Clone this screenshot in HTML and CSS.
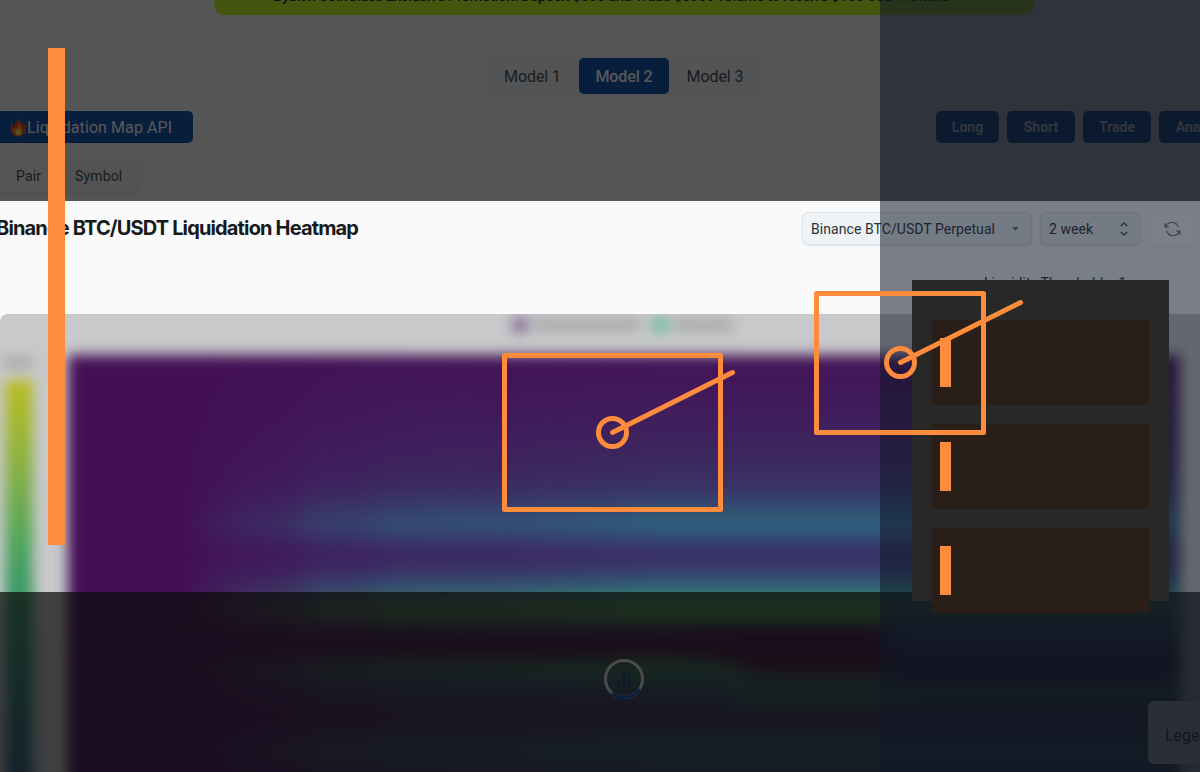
FILE: index.html
```html
<!DOCTYPE html>
<html lang="en">
<head>
<meta charset="utf-8">
<title>Liquidation Heatmap</title>
<link rel="stylesheet" href="styles.css">
</head>
<body>
<main class="page">
  <header class="promo"><span>Bybit x CoinGlass Exclusive Promotion: Deposit $500 and Trade $5000 volume to receive $100 USDT reward &gt;&gt;</span></header>
  <nav class="models">
    <span class="model">Model 1</span><span class="model active">Model 2</span><span class="model">Model 3</span>
  </nav>
  <div class="actions">
    <span class="api"><svg class="flame" viewBox="0 0 18 20"><path fill="#f4511e" d="M9 0c0 3 4 5 5 9l1-3c2 4 3 8 0 11-3 4-10 4-13 0-2-3-2-6 0-9l2 3C4 6 9 5 9 0z"/><path fill="#f4511e" d="M1 5l2 1-1 4-1-1z"/><path fill="#ff9d2e" d="M9 5c0 4 5 5 4 10-1 5-8 5-9 1-1-3 1-4 2-6l1 2c2-2 2-4 2-7z"/><path fill="#ffe57a" d="M9 11c3 3 4 5 2 7-2 2-5 1-5-2 0-2 3-3 3-5z"/></svg><span class="api-text">Liquidation Map API</span></span>
    <div class="links"><b class="link long">Long</b><b class="link">Short</b><b class="link">Trade</b><b class="link analysis">Analysis</b></div>
  </div>
  <div class="scope"><span class="pair">Pair</span><span class="symbol">Symbol</span></div>
  <section class="heading">
    <h1>Binance BTC/USDT Liquidation Heatmap</h1>
    <div class="controls">
      <div class="select market"><span>Binance BTC/USDT Perpetual</span><svg width="7" height="4" viewBox="0 0 8 5"><path d="M0 .3h8L4 4.6z" fill="#59636e"/></svg></div>
      <div class="select period"><span>2 week</span><svg width="8" height="14" viewBox="0 0 8 14"><path d="M.8 4L4 1l3.200 3M.8 10L4 13l3.200-3" fill="none" stroke="#4c5660" stroke-width="1.400"/></svg></div>
      <div class="refresh"><svg width="17" height="16" viewBox="0 0 17 16" fill="none" stroke="#687078" stroke-width="1.100"><path d="M1 2v4h4M1.300 6C3.500 1 9 0 12.500 3l2 3M16 14v-4h-4M15.700 10c-2.200 5-7.700 6-11.200 3l-2-3"/></svg></div>
    </div>
  </section>
  <div class="threshold"><span>Liquidity Threshold = 1</span></div>
  <section class="chart">
    <svg class="heat" width="1200" height="458" viewBox="0 314 1200 458">
      <defs>
        <filter id="soft" x="-5%" y="-10%" width="110%" height="120%" color-interpolation-filters="sRGB"><feGaussianBlur stdDeviation="6.500"/></filter>
        <filter id="wide" x="-20%" y="-80%" width="140%" height="260%" color-interpolation-filters="sRGB"><feGaussianBlur stdDeviation="9"/></filter>
        <linearGradient id="scale" gradientUnits="userSpaceOnUse" x1="0" y1="380" x2="0" y2="780">
          <stop offset="0" stop-color="#babd20"/><stop offset=".24" stop-color="#82af45"/><stop offset=".42" stop-color="#4da45e"/><stop offset=".58" stop-color="#35946a"/><stop offset=".8" stop-color="#2d7777"/><stop offset="1" stop-color="#305a7d"/>
        </linearGradient>
        <linearGradient id="bands" gradientUnits="userSpaceOnUse" x1="0" y1="355" x2="0" y2="772">
          <stop offset="0" stop-color="#441457"/><stop offset=".14" stop-color="#401d5c"/><stop offset=".24" stop-color="#3d275f"/><stop offset=".31" stop-color="#3a3164"/><stop offset=".36" stop-color="#35476f"/><stop offset=".4" stop-color="#2e627b"/><stop offset=".43" stop-color="#32527a"/><stop offset=".47" stop-color="#3b2f68"/><stop offset=".51" stop-color="#383868"/><stop offset=".55" stop-color="#305e78"/><stop offset=".57" stop-color="#30737a"/><stop offset=".605" stop-color="#508e45"/><stop offset=".63" stop-color="#458650"/><stop offset=".658" stop-color="#38365c"/><stop offset=".69" stop-color="#481042"/><stop offset=".715" stop-color="#41284a"/><stop offset=".75" stop-color="#367a55"/><stop offset=".785" stop-color="#325967"/><stop offset=".84" stop-color="#3a375d"/><stop offset=".88" stop-color="#3b315b"/><stop offset=".95" stop-color="#315f70"/><stop offset="1" stop-color="#35405f"/>
        </linearGradient>
        <linearGradient id="fade" gradientUnits="userSpaceOnUse" x1="180" y1="0" x2="660" y2="0">
          <stop offset="0" stop-color="#000"/><stop offset=".12" stop-color="#444"/><stop offset=".23" stop-color="#666"/><stop offset=".29" stop-color="#999"/><stop offset=".38" stop-color="#a2a2a2"/><stop offset=".44" stop-color="#c2c2c2"/><stop offset=".7" stop-color="#d2d2d2"/><stop offset="1" stop-color="#fff"/>
        </linearGradient>
        <mask id="reveal" maskUnits="userSpaceOnUse" x="0" y="300" width="1200" height="490"><rect y="300" width="1200" height="490" fill="url(#fade)"/></mask>
        <clipPath id="plot"><rect x="68" y="355" width="1112" height="440"/></clipPath>
      </defs>
      <g filter="url(#soft)">
        <rect x="5" y="380" width="28" height="420" fill="url(#scale)"/>
        <rect x="3" y="358" width="30" height="9" fill="#a0a1a3"/>
        <circle cx="520" cy="325" r="8" fill="#7c6090"/><rect x="533" y="320" width="107" height="10" fill="#a2a3a4"/>
        <circle cx="660" cy="325" r="8" fill="#5fb894"/><rect x="673" y="320" width="60" height="10" fill="#a2a3a4"/>
        <g clip-path="url(#plot)">
          <rect x="68" y="355" width="1120" height="440" fill="#440f55"/>
          <rect x="68" y="355" width="1120" height="440" fill="url(#bands)" mask="url(#reveal)"/>
          <g filter="url(#wide)">
            <path d="M75 647l100-20 110 8 110 10" fill="none" stroke="#6e2858" stroke-width="9" opacity=".35"/>
            <path d="M655 632h240v42H760z" fill="#43103f"/>
            <rect x="890" y="617" width="300" height="28" fill="#2d5b72"/>
            <rect x="890" y="650" width="300" height="34" fill="#3c264d"/>
            <rect x="730" y="684" width="450" height="18" fill="#30665c"/>
          </g>
        </g>
      </g>
    </svg>
    <svg class="loader" width="40" height="40" viewBox="0 0 40 40" fill="none" stroke-width="3"><circle cx="20" cy="20" r="18.500" stroke="#f0f0f0"/><path d="M8 34.200A18.500 18.500 0 0 0 35.500 30" stroke="#0d5ab5"/><path d="M15 21v6M20 12.500v14.500M25 18v9" stroke="#0e3e86" stroke-width="2"/></svg>
    <div class="legend">Legend</div>
  </section>
  <div class="shade top"></div>
  <div class="shade bottom"></div>
  <div class="shade side"></div>
  <aside class="panel"><div class="row"><i></i></div><div class="row"><i></i></div><div class="row"><i></i></div></aside>
  <div class="marker"></div>
  <svg class="marks" width="1200" height="772" viewBox="0 0 1200 772" fill="none" stroke="#ff8b3d" stroke-width="5" stroke-linejoin="round" stroke-linecap="round">
    <rect x="504.500" y="355.500" width="216" height="154"/><circle cx="612.500" cy="432.500" r="14"/><path d="M612.500 432.500l120-60"/>
    <rect x="816.500" y="293.500" width="167" height="139"/><circle cx="900.500" cy="362.500" r="14"/><path d="M900.500 362.500l120-60"/>
  </svg>
</main>
</body>
</html>
```
FILE: styles.css
```css
* { box-sizing: border-box; }
body { margin: 0; overflow: hidden; }
.page {
  position: relative;
  display: flex;
  flex-direction: column;
  width: 1200px;
  height: 772px;
  overflow: hidden;
  background: #fafafa;
  color: #2b3239;
  font-family: Roboto, "Liberation Sans", sans-serif;
}
.promo {
  display: flex;
  width: 820px;
  height: 15px;
  margin-left: 214px;
  padding-left: 59px;
  border-radius: 0 0 10px 10px;
  background: #c6fa2d;
  font-size: 15px;
  font-weight: 500;
  line-height: 20px;
  white-space: nowrap;
}
.promo span { margin-top: -14px; letter-spacing: -.45px; }
.models {
  display: flex;
  width: 278px;
  height: 42px;
  margin: 40px 0 0 485px;
  padding: 3px 4px;
  border-radius: 12px;
  background: #f4f6fa;
  box-shadow: 0 1px 1px #e6e9ed;
  color: #4c535a;
  font-size: 16px;
  line-height: 37px;
  text-align: center;
}
.model { height: 36px; width: 90px; letter-spacing: -.1px; }
.model:first-child { padding-right: 3px; }
.model:last-child { padding-left: 2px; }
.model.active { border-radius: 5px; background: #155ab4; color: #fff; font-weight: 500; }
.actions { display: flex; justify-content: space-between; height: 32px; margin-top: 14px; }
.api {
  display: flex;
  align-items: center;
  width: 197px;
  margin-left: -4px;
  padding-left: 14px;
  border-radius: 5px;
  background: #155ab4;
  color: #fff;
}
.flame { width: 17px; height: 20px; }
.api-text { font-size: 16px; letter-spacing: .08px; }
.links { display: flex; gap: 8px; width: 264px; }
.link {
  flex: 0 0 68px;
  border-radius: 5px;
  background: #155ab4;
  color: #fff;
  font-size: 14px;
  line-height: 32px;
  text-align: center;
}
.long { flex-basis: 63px; }
.analysis { flex-basis: 90px; padding-right: 3px; }
.scope {
  display: flex;
  width: 146px;
  height: 36px;
  margin: 15px 0 0 -4px;
  padding: 2px;
  border-radius: 12px;
  background: #f2f4f7;
  box-shadow: 0 1px 1px #e6e9ed;
  color: #4c535a;
  font-size: 14px;
  line-height: 32px;
  letter-spacing: .15px;
}
.pair { width: 62px; padding-left: 18px; border-radius: 9px; background: #fafafa; }
.symbol { padding-left: 15px; }
.heading { display: flex; justify-content: space-between; height: 55px; margin-top: 7px; padding: 11px 18px 0 0; }
h1 {
  margin: -1px 0 0 -4px;
  color: #171a1d;
  font: 700 20px/34px Inter, sans-serif;
  letter-spacing: -.85px;
  white-space: nowrap;
}
.controls { display: flex; gap: 8px; }
.select {
  display: flex;
  align-items: center;
  justify-content: space-between;
  height: 33px;
  border: 1px solid #dce7ee;
  border-radius: 6px;
  background: #eff3f6;
  box-shadow: 0 1px 2px #dde4e9;
  font-size: 14px;
}
.market { width: 230px; padding: 0 12px 0 8px; letter-spacing: .06px; }
.period { width: 101px; padding: 0 12px 0 8px; letter-spacing: .05px; }
.refresh {
  display: grid;
  place-items: center;
  width: 47px;
  height: 33px;
  margin-right: -14px;
  border-radius: 6px;
  background: #fcfcfd;
  box-shadow: 0 1px 2px #eee;
}
.threshold { height: 58px; padding: 19px 0 0 984px; font-size: 14px; line-height: 16px; letter-spacing: .08px; }
.chart {
  position: relative;
  flex: none;
  height: 458px;
  overflow: hidden;
  border-radius: 8px 0 0;
  background: #c8c9ca;
}
.heat { display: block; }
.loader { position: absolute; left: 604px; top: 345px; }
.legend {
  position: absolute;
  left: 1148px;
  top: 387px;
  width: 90px;
  height: 63px;
  padding-left: 17px;
  border-radius: 6px;
  background: #e8eced;
  font-size: 16px;
  line-height: 70px;
}
.shade { position: absolute; }
.top { inset: 0 0 auto; height: 201px; background: rgba(0, 0, 0, .66); }
.bottom { inset: 592px 0 0; background: rgba(11, 11, 11, .72); }
.side { inset: 0 0 0 880px; background: rgba(17, 24, 39, .55); }
.panel {
  position: absolute;
  left: 912px;
  top: 280px;
  display: flex;
  flex-direction: column;
  gap: 19px;
  width: 257px;
  height: 321px;
  padding: 40px 20px 0;
  background: #282828;
}
.row { flex: 0 0 85px; padding: 18px 8px; background: #291e18; }
.row i { display: block; width: 11px; height: 49px; background: #ff8b3d; }
.marker { position: absolute; left: 48px; top: 48px; width: 17px; height: 497px; background: #ff8b3d; }
.marks { position: absolute; inset: 0; }
```
